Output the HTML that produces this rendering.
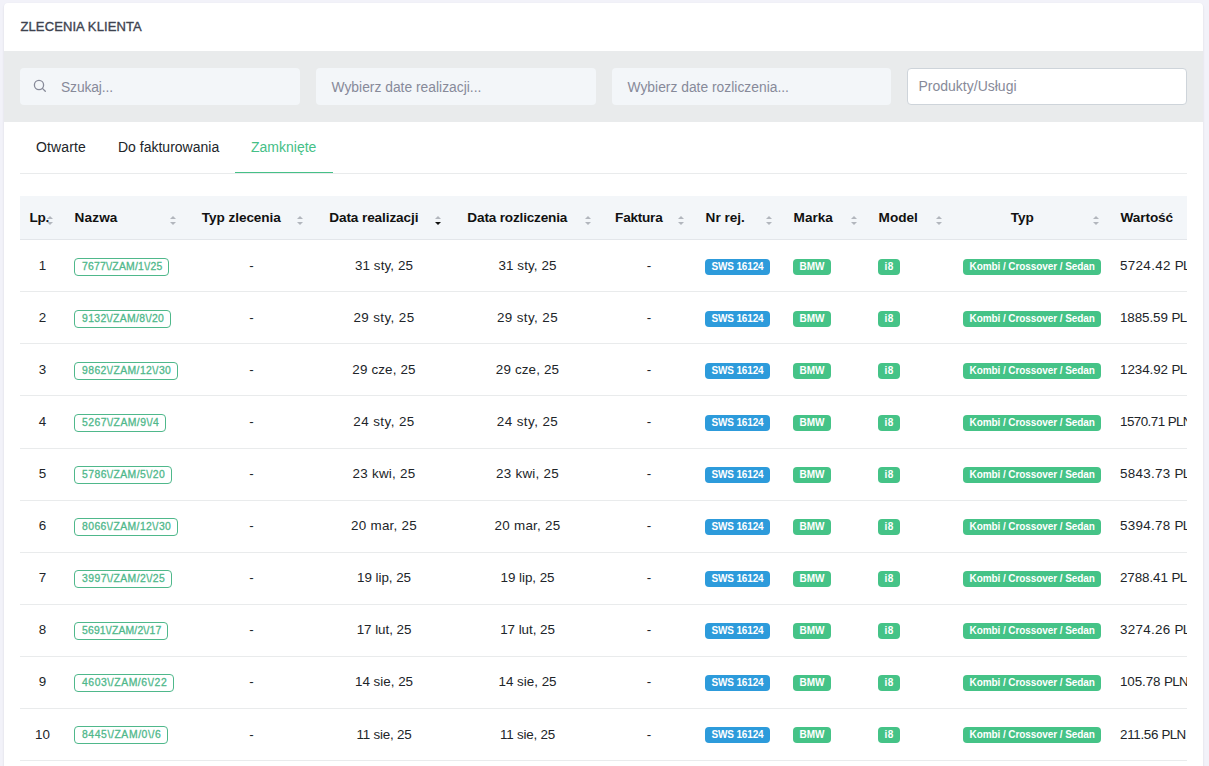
<!DOCTYPE html>
<html lang="pl">
<head>
<meta charset="utf-8">
<title>Zlecenia klienta</title>
<style>
*{box-sizing:border-box;margin:0;padding:0}
html,body{width:1209px;height:766px;overflow:hidden}
body{background:#f2f2f9;font-family:"Liberation Sans",sans-serif;font-size:13px;color:#212529;position:relative}
.card{position:absolute;left:4px;top:3px;width:1199px;height:800px;background:#fff;border-radius:4px 4px 0 0;box-shadow:0 1px 2px rgba(56,65,74,.15)}
.title{position:absolute;left:16.5px;top:16px;font-size:13px;line-height:16px;color:#3e434f;font-weight:400;letter-spacing:.1px;text-transform:uppercase;white-space:nowrap;-webkit-text-stroke:.35px #3e434f}
.filters{position:absolute;left:0;top:48px;width:1199px;height:71px;background:#e9ebec}
.inp{position:absolute;top:17px;height:37px;width:280px;background:#f3f6f9;border-radius:4px;font-size:13.85px;line-height:38px;color:#878a99;padding-left:15.5px;white-space:nowrap}
.inp.s{padding-left:41px}
.inp.w{background:#fff;border:1px solid #ced4da;line-height:34px;padding-left:10.5px;font-size:14px}
.inp svg{position:absolute;left:13px;top:10.5px}
.tabs{position:absolute;left:16px;top:119px;width:1167px;height:52px;border-bottom:1px solid #e9ebec}
.tab{position:absolute;top:0;height:51px;line-height:50px;font-size:14px;color:#212529;white-space:nowrap}
.tab.a{color:#45c087}
.tab.a:after{content:"";position:absolute;left:-16px;right:-17px;bottom:0;height:1px;background:#45c087}
.tw{position:absolute;left:16px;top:193px;width:1167px;height:620px;overflow:hidden}
table{border-collapse:separate;border-spacing:0;table-layout:fixed;width:1241px}
th{height:44px;background:#f3f6f9;font-size:13.6px;font-weight:700;color:#111;text-align:left;padding:0 30px 0.4px 9.6px;position:relative;white-space:nowrap;border-bottom:1px solid #e3e6ea}
th.c{text-align:center}
td{height:52px;border-bottom:1px solid #e9ebec;font-size:13.4px;color:#212529;padding:0 9.6px 0 9px;text-align:left;white-space:nowrap;vertical-align:middle}
td.c{text-align:center;padding:0 9.6px}
th i{position:absolute;right:11px;top:18px;width:7px;height:12px}
th i:before,th i:after{content:"";position:absolute;left:0;border-left:3.5px solid transparent;border-right:3.5px solid transparent}
th i:before{top:2px;border-bottom:3.2px solid #b2b6bd}
th i:after{top:8px;border-top:3.2px solid #b2b6bd}
th i.d:after{border-top-color:#111}
.b{display:block;width:fit-content;font-size:10px;font-weight:700;line-height:10px;padding:3px 6.5px;border-radius:4px;color:#fff}
td.bc{vertical-align:top;padding-top:19px}
.r79 td.bc,.r10 td.bc{padding-top:18px}
.h53 td{height:53px;padding-bottom:2px!important}
.r79 td{padding-bottom:2px!important}
.p{letter-spacing:-.7px}
.b.g{background:#45c387}
.b.bl{background:#2d9bdb}
.b.o{margin-top:-1px;background:#fff;color:#4fb88b;border:1px solid #4fb88b;padding:3px 6px 3px 7px;font-size:10.4px;font-weight:400;letter-spacing:.1px;-webkit-text-stroke:.3px #4fb88b}
</style>
</head>
<body>
<div class="card">
  <div class="title">ZLECENIA KLIENTA</div>
  <div class="filters">
    <div class="inp s" style="left:16px"><svg width="14" height="14" viewBox="0 0 14 14" fill="none" stroke="#878a99" stroke-width="1.3"><circle cx="6" cy="6" r="4.6"/><path d="M9.4 9.4L12.3 12.3" stroke-linecap="round"/></svg><span style="letter-spacing:-.13px">Szukaj...</span></div>
    <div class="inp" style="left:312px">Wybierz date realizacji...</div>
    <div class="inp" style="left:608px;width:279px">Wybierz date rozliczenia...</div>
    <div class="inp w" style="left:903px">Produkty/Usługi</div>
  </div>
  <div class="tabs">
    <div class="tab" style="left:16px;letter-spacing:.12px">Otwarte</div>
    <div class="tab" style="left:98px">Do fakturowania</div>
    <div class="tab a" style="left:231px">Zamknięte</div>
  </div>
  <div class="tw">
  <table>
    <colgroup><col style="width:45px"><col style="width:123px"><col style="width:127px"><col style="width:138px"><col style="width:149px"><col style="width:94px"><col style="width:88px"><col style="width:85px"><col style="width:85px"><col style="width:157px"><col style="width:150px"></colgroup>
    <thead><tr>
      <th><span style="letter-spacing:-0.3px">Lp.</span><i></i></th><th><span style="letter-spacing:0.12px">Nazwa</span><i></i></th><th class="c"><span style="letter-spacing:-0.07px">Typ zlecenia</span><i></i></th><th class="c"><span style="letter-spacing:-0.11px">Data realizacji</span><i class="d"></i></th><th class="c"><span style="letter-spacing:-0.18px">Data rozliczenia</span><i style="right:10px"></i></th><th class="c"><span style="letter-spacing:-0.25px">Faktura</span><i></i></th><th><span>Nr rej.</span><i></i></th><th><span>Marka</span><i></i></th><th><span>Model</span><i></i></th><th class="c"><span>Typ</span><i></i></th><th><span style="letter-spacing:-0.1px">Wartość</span><i></i></th>
    </tr></thead>
    <tbody>
      <tr><td class="c">1</td><td class="bc"><span class="b o" style="letter-spacing:0.24px">7677\/ZAM/1\/25</span></td><td class="c">-</td><td class="c" style="letter-spacing:0.10px">31 sty, 25</td><td class="c" style="letter-spacing:0.10px">31 sty, 25</td><td class="c">-</td><td class="bc"><span class="b bl" style="letter-spacing:-.15px">SWS 16124</span></td><td class="bc"><span class="b g">BMW</span></td><td class="bc"><span class="b g" style="letter-spacing:.4px">i8</span></td><td class="bc"><span class="b g" style="letter-spacing:-.08px">Kombi / Crossover / Sedan</span></td><td style="letter-spacing:0.34px">5724.42 <span class="p">PLN</span></td></tr>
      <tr><td class="c">2</td><td class="bc"><span class="b o" style="letter-spacing:0.36px">9132\/ZAM/8\/20</span></td><td class="c">-</td><td class="c" style="letter-spacing:0.41px">29 sty, 25</td><td class="c" style="letter-spacing:0.41px">29 sty, 25</td><td class="c">-</td><td class="bc"><span class="b bl" style="letter-spacing:-.15px">SWS 16124</span></td><td class="bc"><span class="b g">BMW</span></td><td class="bc"><span class="b g" style="letter-spacing:.4px">i8</span></td><td class="bc"><span class="b g" style="letter-spacing:-.08px">Kombi / Crossover / Sedan</span></td><td style="letter-spacing:-0.09px">1885.59 <span class="p">PLN</span></td></tr>
      <tr><td class="c">3</td><td class="bc"><span class="b o" style="letter-spacing:0.42px">9862\/ZAM/12\/30</span></td><td class="c">-</td><td class="c" style="letter-spacing:0.15px">29 cze, 25</td><td class="c" style="letter-spacing:0.15px">29 cze, 25</td><td class="c">-</td><td class="bc"><span class="b bl" style="letter-spacing:-.15px">SWS 16124</span></td><td class="bc"><span class="b g">BMW</span></td><td class="bc"><span class="b g" style="letter-spacing:.4px">i8</span></td><td class="bc"><span class="b g" style="letter-spacing:-.08px">Kombi / Crossover / Sedan</span></td><td style="letter-spacing:-0.07px">1234.92 <span class="p">PLN</span></td></tr>
      <tr class="h53"><td class="c">4</td><td class="bc"><span class="b o" style="letter-spacing:0.45px">5267\/ZAM/9\/4</span></td><td class="c">-</td><td class="c" style="letter-spacing:0.44px">24 sty, 25</td><td class="c" style="letter-spacing:0.44px">24 sty, 25</td><td class="c">-</td><td class="bc"><span class="b bl" style="letter-spacing:-.15px">SWS 16124</span></td><td class="bc"><span class="b g">BMW</span></td><td class="bc"><span class="b g" style="letter-spacing:.4px">i8</span></td><td class="bc"><span class="b g" style="letter-spacing:-.08px">Kombi / Crossover / Sedan</span></td><td style="letter-spacing:-0.55px">1570.71 <span class="p">PLN</span></td></tr>
      <tr class="r79"><td class="c">5</td><td class="bc"><span class="b o" style="letter-spacing:0.43px">5786\/ZAM/5\/20</span></td><td class="c">-</td><td class="c" style="letter-spacing:0.25px">23 kwi, 25</td><td class="c" style="letter-spacing:0.25px">23 kwi, 25</td><td class="c">-</td><td class="bc"><span class="b bl" style="letter-spacing:-.15px">SWS 16124</span></td><td class="bc"><span class="b g">BMW</span></td><td class="bc"><span class="b g" style="letter-spacing:.4px">i8</span></td><td class="bc"><span class="b g" style="letter-spacing:-.08px">Kombi / Crossover / Sedan</span></td><td style="letter-spacing:0.30px">5843.73 <span class="p">PLN</span></td></tr>
      <tr class="r79"><td class="c">6</td><td class="bc"><span class="b o" style="letter-spacing:0.42px">8066\/ZAM/12\/30</span></td><td class="c">-</td><td class="c" style="letter-spacing:0.25px">20 mar, 25</td><td class="c" style="letter-spacing:0.25px">20 mar, 25</td><td class="c">-</td><td class="bc"><span class="b bl" style="letter-spacing:-.15px">SWS 16124</span></td><td class="bc"><span class="b g">BMW</span></td><td class="bc"><span class="b g" style="letter-spacing:.4px">i8</span></td><td class="bc"><span class="b g" style="letter-spacing:-.08px">Kombi / Crossover / Sedan</span></td><td style="letter-spacing:0.30px">5394.78 <span class="p">PLN</span></td></tr>
      <tr class="r79"><td class="c">7</td><td class="bc"><span class="b o" style="letter-spacing:0.43px">3997\/ZAM/2\/25</span></td><td class="c">-</td><td class="c" style="letter-spacing:-0.04px">19 lip, 25</td><td class="c" style="letter-spacing:-0.04px">19 lip, 25</td><td class="c">-</td><td class="bc"><span class="b bl" style="letter-spacing:-.15px">SWS 16124</span></td><td class="bc"><span class="b g">BMW</span></td><td class="bc"><span class="b g" style="letter-spacing:.4px">i8</span></td><td class="bc"><span class="b g" style="letter-spacing:-.08px">Kombi / Crossover / Sedan</span></td><td style="letter-spacing:-0.09px">2788.41 <span class="p">PLN</span></td></tr>
      <tr class="r79"><td class="c">8</td><td class="bc"><span class="b o" style="letter-spacing:0.17px">5691\/ZAM/2\/17</span></td><td class="c">-</td><td class="c" style="letter-spacing:-0.04px">17 lut, 25</td><td class="c" style="letter-spacing:-0.04px">17 lut, 25</td><td class="c">-</td><td class="bc"><span class="b bl" style="letter-spacing:-.15px">SWS 16124</span></td><td class="bc"><span class="b g">BMW</span></td><td class="bc"><span class="b g" style="letter-spacing:.4px">i8</span></td><td class="bc"><span class="b g" style="letter-spacing:-.08px">Kombi / Crossover / Sedan</span></td><td style="letter-spacing:0.30px">3274.26 <span class="p">PLN</span></td></tr>
      <tr class="r79"><td class="c">9</td><td class="bc"><span class="b o" style="letter-spacing:0.56px">4603\/ZAM/6\/22</span></td><td class="c">-</td><td class="c" style="letter-spacing:0.00px">14 sie, 25</td><td class="c" style="letter-spacing:0.00px">14 sie, 25</td><td class="c">-</td><td class="bc"><span class="b bl" style="letter-spacing:-.15px">SWS 16124</span></td><td class="bc"><span class="b g">BMW</span></td><td class="bc"><span class="b g" style="letter-spacing:.4px">i8</span></td><td class="bc"><span class="b g" style="letter-spacing:-.08px">Kombi / Crossover / Sedan</span></td><td style="letter-spacing:-0.10px">105.78 <span class="p">PLN</span></td></tr>
      <tr class="r10"><td class="c">10</td><td class="bc"><span class="b o" style="letter-spacing:0.59px">8445\/ZAM/0\/6</span></td><td class="c">-</td><td class="c" style="letter-spacing:-0.20px">11 sie, 25</td><td class="c" style="letter-spacing:-0.20px">11 sie, 25</td><td class="c">-</td><td class="bc"><span class="b bl" style="letter-spacing:-.15px">SWS 16124</span></td><td class="bc"><span class="b g">BMW</span></td><td class="bc"><span class="b g" style="letter-spacing:.4px">i8</span></td><td class="bc"><span class="b g" style="letter-spacing:-.08px">Kombi / Crossover / Sedan</span></td><td style="letter-spacing:-0.30px">211.56 <span class="p">PLN</span></td></tr>
    </tbody>
  </table>
  </div>
</div>
</body>
</html>
